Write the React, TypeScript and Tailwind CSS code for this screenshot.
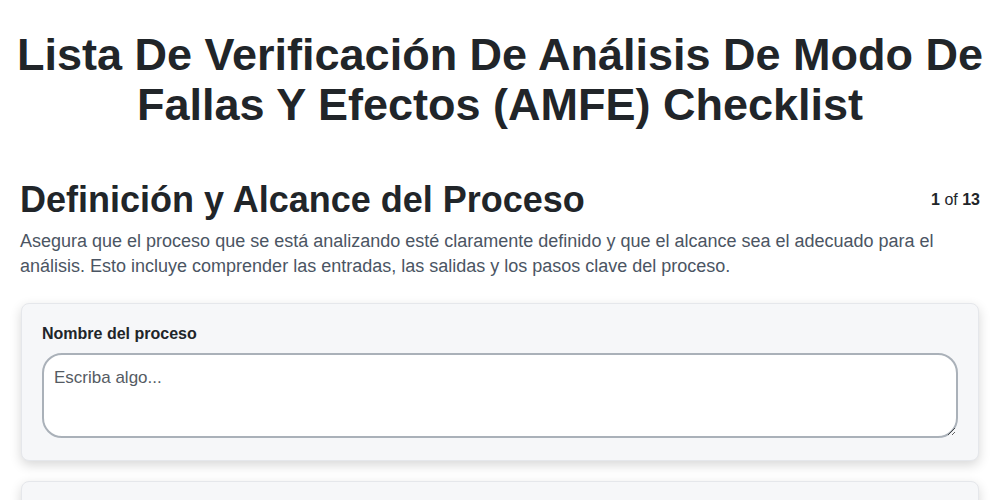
import React from 'react';

export default function App() {
  return (
    <div className="min-h-screen bg-white px-5 text-[#212529]" style={{ fontFamily: '"Liberation Sans", Arial, sans-serif' }}>
      <h1 className="-mx-3 pt-[30px] text-center text-[45px] font-bold leading-[50px]">
        Lista De Verificación De Análisis De Modo De Fallas Y Efectos (AMFE) Checklist
      </h1>

      <div className="mt-[48px] flex items-start justify-between">
        <h2 className="text-[36px] font-bold leading-[44px]">Definición y Alcance del Proceso</h2>
        <div className="mt-[12px] text-[16px] leading-[20px]">
          <span className="font-bold">1</span> of <span className="font-bold">13</span>
        </div>
      </div>
      <p className="mt-[7px] text-[18px] leading-[25px] text-[#4b5563]">
        Asegura que el proceso que se está analizando esté claramente definido y que el alcance sea el adecuado para el
        análisis. Esto incluye comprender las entradas, las salidas y los pasos clave del proceso.
      </p>

      {/* question cards */}
      <div className="mx-px mt-[24px] flex flex-col gap-[20px]">
        <div className="rounded-lg border border-[#e5e7eb] bg-[#f6f7f9] px-[20px] pb-[22px] pt-[20px] shadow-[0_4px_12px_rgba(0,0,0,0.16)]">
          <label className="block text-[16px] font-bold leading-[20px]">Nombre del proceso</label>
          <textarea
            placeholder="Escriba algo..."
            className="mt-[9px] block h-[85px] w-full rounded-[20px] border-2 border-[#aab1b9] bg-white px-[10px] py-[10px] text-[17px] placeholder:text-[#555b63]"
          />
        </div>
        <div className="h-[60px] rounded-lg border border-[#e5e7eb] bg-[#f6f7f9] shadow-[0_4px_12px_rgba(0,0,0,0.16)]" />
      </div>
    </div>
  );
}
